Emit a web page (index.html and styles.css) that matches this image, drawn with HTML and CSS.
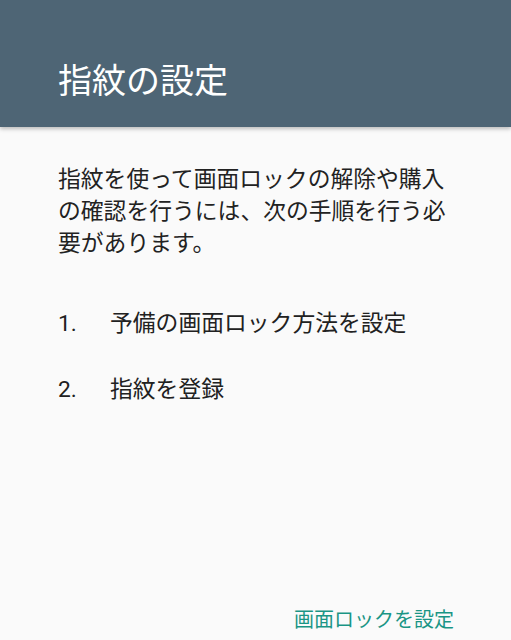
FILE: index.html
```html
<!DOCTYPE html>
<html lang="ja">
<head>
<meta charset="utf-8">
<link rel="stylesheet" href="styles.css">
</head>
<body>
<div class="page">
  <header class="bar">
    <h1 class="title">指紋の設定</h1>
  </header>
  <main class="content">
    <p class="intro">指紋を使って画面ロックの解除や購入の確認を行うには、次の手順を行う必要があります。</p>
    <ol class="steps">
      <li class="step"><span class="num">1.</span><span class="label">予備の画面ロック方法を設定</span></li>
      <li class="step"><span class="num">2.</span><span class="label">指紋を登録</span></li>
    </ol>
  </main>
  <footer class="actions">
    <span class="btn">画面ロックを設定</span>
  </footer>
</div>
</body>
</html>
```
FILE: styles.css
```css
html, body {
  margin: 0;
  padding: 0;
  background: #fafafa;
}
body {
  font-family: "Roboto", "Noto Sans CJK JP", sans-serif;
  color: #212121;
}
.page {
  width: 511px;
  height: 640px;
  display: flex;
  flex-direction: column;
  overflow: hidden;
}
.bar {
  height: 127px;
  background: #4e6575;
  box-shadow: 0 2px 4px rgba(0,0,0,0.25);
  display: flex;
  align-items: flex-end;
  padding: 0 58px;
  box-sizing: border-box;
  position: relative;
  z-index: 1;
}
.title {
  margin: 0 0 24px 0;
  font-size: 34px;
  font-weight: 400;
  color: #ffffff;
  line-height: 44px;
}
.content {
  flex: 1;
  padding: 0 58px;
}
.intro {
  margin: 37px 0 0 0;
  font-size: 22.8px;
  line-height: 32px;
  color: #222;
}
.steps {
  list-style: none;
  margin: 48px 0 0 0;
  padding: 0;
  display: flex;
  flex-direction: column;
  gap: 34px;
}
.step {
  display: flex;
  font-size: 22.8px;
  line-height: 32px;
}
.num {
  width: 52px;
}
.actions {
  display: flex;
  justify-content: flex-end;
  padding: 0 57px 4px 0;
}
.btn {
  font-size: 20px;
  line-height: 32px;
  color: #1a9585;
}
```
